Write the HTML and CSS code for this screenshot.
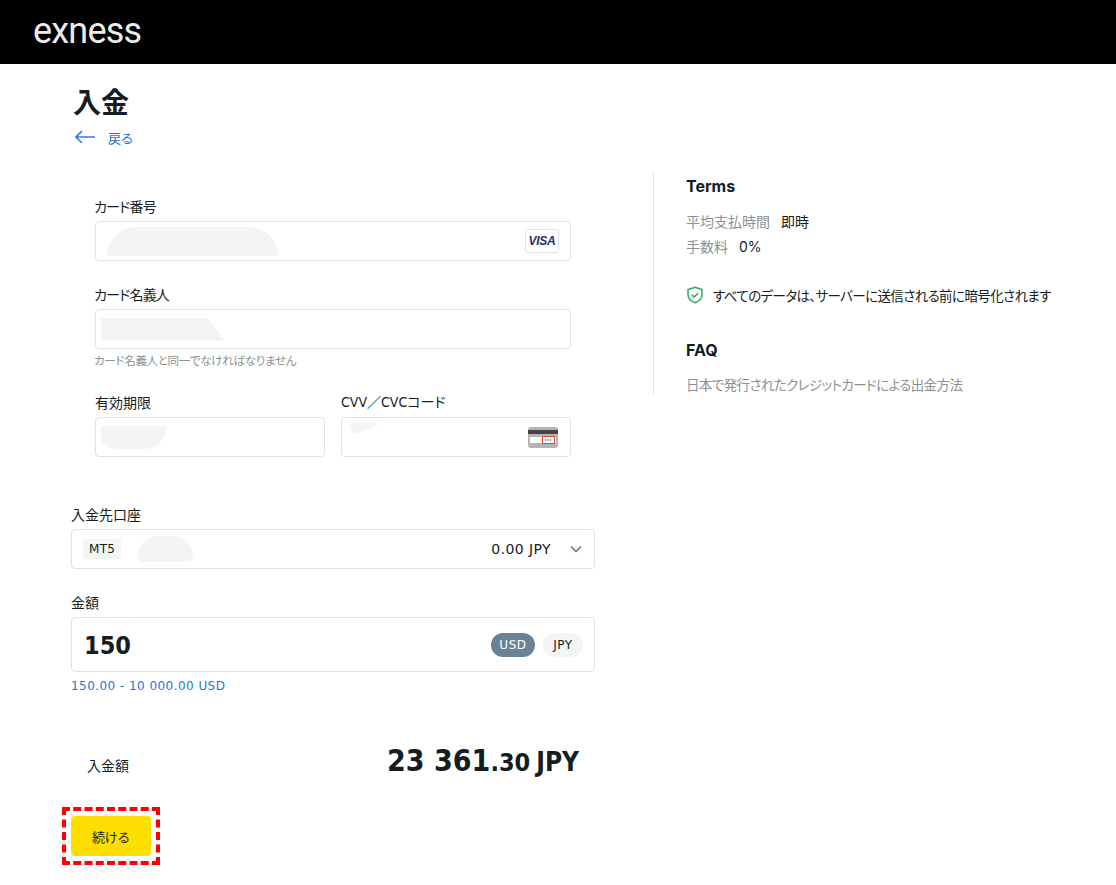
FILE: index.html
```html
<!DOCTYPE html>
<html lang="ja">
<head>
    <meta charset="UTF-8">
    <meta name="viewport" content="width=device-width, initial-scale=1.0">
    <title>入金</title>
    <link rel="stylesheet" href="styles.css">
</head>
<body>
    <div class="topbar">
        <span class="logo">exness</span>
    </div>
    <div class="page">
        <h1 class="title">入金</h1>
        <a class="back" href="#">
            <svg width="20" height="14" viewBox="0 0 20 14" fill="none" stroke="#2f80d0" stroke-width="1.6">
                <path d="M20 7H1M7 1L1 7l6 6"/>
            </svg>
            <span>戻る</span>
        </a>
        <div class="columns">
            <div class="form">
                <div class="card-fields">
                    <div class="field">
                        <label class="label label-kana">カード番号</label>
                        <div class="input">
                            <div class="mask mask-number"></div>
                            <div class="visa">VISA</div>
                        </div>
                    </div>
                    <div class="field">
                        <label class="label label-kana">カード名義人</label>
                        <div class="input">
                            <div class="mask mask-name"></div>
                        </div>
                        <div class="hint">カード名義人と同一でなければなりません</div>
                    </div>
                    <div class="field-row">
                        <div class="field">
                            <label class="label">有効期限</label>
                            <div class="input">
                                <div class="mask mask-expiry"></div>
                            </div>
                        </div>
                        <div class="field">
                            <label class="label condensed">CVV／CVCコード</label>
                            <div class="input">
                                <div class="mask mask-cvv"></div>
                                <svg class="cvv-icon" width="30" height="21" viewBox="0 0 30 21">
                                    <rect width="30" height="21" rx="3" fill="#b4b4b4"/>
                                    <rect y="3" width="30" height="4" fill="#444"/>
                                    <rect x="2" y="10" width="26" height="6" fill="#fff"/>
                                    <rect x="14.5" y="9.5" width="12" height="7" fill="#fff" stroke="#e2492f"/>
                                    <path d="M17 13h7" stroke="#777" stroke-width="1.4" stroke-dasharray="1.4 1"/>
                                </svg>
                            </div>
                        </div>
                    </div>
                </div>

                <div class="field account">
                    <label class="label">入金先口座</label>
                    <div class="input select">
                        <span class="tag latin">MT5</span>
                        <div class="mask mask-account"></div>
                        <span class="balance latin">0.00 JPY</span>
                        <svg width="12" height="8" viewBox="0 0 12 8" fill="none" stroke="#6b7479" stroke-width="1.4">
                            <path d="M1 1.5l5 5 5-5"/>
                        </svg>
                    </div>
                </div>

                <div class="field amount">
                    <label class="label">金額</label>
                    <div class="input amount-input">
                        <span class="amount-value condensed">150</span>
                        <span class="pill pill-active latin">USD</span>
                        <span class="pill latin">JPY</span>
                    </div>
                    <div class="range latin">150.00 - 10 000.00 USD</div>
                </div>

                <div class="total">
                    <span class="total-label">入金額</span>
                    <span class="total-value condensed">23 361<small>.30</small><span class="total-cur latin">JPY</span></span>
                </div>

                <div class="highlight">
                    <button class="button">続ける</button>
                </div>
            </div>

            <div class="side">
                <h3 class="side-title">Terms</h3>
                <div class="term"><span class="term-name">平均支払時間</span><span>即時</span></div>
                <div class="term"><span class="term-name">手数料</span><span>0%</span></div>
                <div class="secure">
                    <svg width="18" height="18" viewBox="0 0 18 18" fill="none" stroke="#27ae60" stroke-width="1.5">
                        <path d="M9 1.2l7 2.4v5c0 4-3 6.8-7 8.2-4-1.400-7-4.200-7-8.200v-5z"/>
                        <path d="M5.800 8.800l2.300 2.300 4.100-4.100"/>
                    </svg>
                    <span>すべてのデータは、サーバーに送信される前に暗号化されます</span>
                </div>
                <h3 class="side-title faq-title">FAQ</h3>
                <a class="faq-link" href="#">日本で発行されたクレジットカードによる出金方法</a>
            </div>
        </div>
    </div>
</body>
</html>
```

FILE: styles.css
```css
body {
    font-family: Inter, "Noto Sans CJK JP", sans-serif;
    font-feature-settings: "palt";
    margin: 0;
    background-color: white;
    color: #141d22;
    font-size: 14px;
}
.latin {
    font-family: "DejaVu Sans", "Noto Sans CJK JP", sans-serif;
}
.condensed {
    font-family: "DejaVu Sans Condensed", "DejaVu Sans", "Noto Sans CJK JP", sans-serif;
    font-stretch: condensed;
}
.topbar {
    height: 64px;
    background: black;
    padding-left: 33px;
    display: flex;
    align-items: center;
}
.logo {
    font-family: Roboto, sans-serif;
    font-size: 36px;
    line-height: 64px;
    letter-spacing: -0.8px;
    color: #ececec;
    margin-top: -2px;
}
.page {
    padding-left: 71px;
}
.title {
    margin: 0;
    padding-top: 21px;
    padding-left: 2px;
    font-size: 28px;
    line-height: 36px;
    font-weight: 700;
}
.back {
    display: flex;
    align-items: center;
    gap: 13px;
    margin-top: 6px;
    padding-left: 4px;
    height: 20px;
    font-size: 13px;
    color: #1f73c9;
    text-decoration: none;
}
.columns {
    display: flex;
    margin-top: 26px;
    align-items: flex-start;
}
.form {
    width: 524px;
    margin-right: 58px;
}
.card-fields {
    padding: 25px 24px 0;
}
.field {
    margin-bottom: 25px;
}
.field-row {
    display: flex;
    gap: 16px;
}
.field-row .field {
    flex: 1;
    margin-bottom: 0;
}
.label {
    display: block;
    height: 19px;
    line-height: 17px;
    margin-bottom: 4px;
}
.label-kana {
    margin-left: -1px;
    letter-spacing: -0.8px;
}
.input {
    height: 40px;
    box-sizing: border-box;
    border: 1px solid #dfe1e2;
    border-radius: 4px;
    display: flex;
    align-items: center;
    justify-content: space-between;
    position: relative;
}
.hint {
    margin: 4px 0 0 -1px;
    font-size: 11.500px;
    line-height: 16px;
    letter-spacing: -0.3px;
    color: #8b9094;
}
.mask {
    background: #f3f4f4;
}
.mask-number {
    width: 171px;
    height: 29px;
    margin-left: 11px;
    margin-top: 1px;
    border-radius: 30px 30px 0 0;
}
.mask-name {
    width: 124px;
    height: 23px;
    margin-left: 5px;
    clip-path: polygon(0 0, 85% 0, 100% 100%, 0 100%);
}
.mask-expiry {
    width: 66px;
    height: 23px;
    margin-left: 5px;
    border-radius: 0 0 50px 30px;
}
.mask-cvv {
    width: 31px;
    height: 10px;
    margin: -18px 0 0 8px;
    clip-path: polygon(0 0, 100% 0, 30% 100%, 8% 100%);
}
.visa {
    width: 34px;
    height: 24px;
    box-sizing: border-box;
    margin-right: 11px;
    border: 1px solid #dfe1e2;
    border-radius: 3px;
    color: #1c3266;
    font-family: "Liberation Sans", sans-serif;
    font-size: 12px;
    font-weight: 700;
    font-style: italic;
    line-height: 22px;
    letter-spacing: -0.3px;
    text-align: center;
}
.cvv-icon {
    margin-right: 12px;
}
.account {
    margin-top: 49px;
}
.select {
    justify-content: flex-start;
    padding: 0 12px 0 11px;
}
.tag {
    background: #f3f4f4;
    border-radius: 3px;
    font-size: 12px;
    line-height: 20px;
    letter-spacing: 0.3px;
    padding: 0 6px;
}
.mask-account {
    width: 55px;
    height: 26px;
    margin-left: 17px;
    margin-top: -1px;
    border-radius: 20px 20px 6px 6px;
}
.balance {
    margin-left: auto;
    margin-right: 19px;
    font-size: 14px;
    letter-spacing: 0.4px;
}
.amount {
    margin-bottom: 0;
}
.amount-input {
    height: 55px;
    justify-content: flex-start;
    gap: 8px;
    padding: 0 11px 0 12px;
}
.amount-value {
    font-size: 25px;
    font-weight: 700;
    margin-top: 2px;
    margin-right: auto;
}
.pill {
    min-width: 40px;
    height: 24px;
    box-sizing: border-box;
    line-height: 24px;
    padding: 0 8.500px;
    border-radius: 12px;
    background: #f3f4f4;
    font-size: 12px;
    letter-spacing: 0.5px;
    text-align: center;
}
.pill-active {
    background: #6a8295;
    color: white;
}
.range {
    margin-top: 6px;
    font-size: 12px;
    line-height: 16px;
    letter-spacing: 0.45px;
    color: #1f78d1;
}
.total {
    display: flex;
    justify-content: space-between;
    align-items: baseline;
    margin-top: 45px;
    padding: 0 16px;
}
.total-value {
    font-size: 30px;
    font-weight: 700;
    line-height: 44px;
}
.total-value small {
    font-size: 25px;
}
.total-cur {
    margin-left: 6px;
    font-size: 26px;
}
.highlight {
    display: inline-block;
    margin: 22px 0 0 -9px;
    padding: 5px;
    border: 4px dashed red;
}
.button {
    display: block;
    width: 80px;
    height: 40px;
    border: 0;
    border-radius: 4px;
    background-color: #ffde02;
    color: #141d22;
    font-family: inherit;
    font-size: 13px;
    letter-spacing: -0.3px;
}
.side {
    height: 221px;
    box-sizing: border-box;
    border-left: 1px solid #dfe1e2;
    padding-left: 32px;
}
.side-title {
    margin: 4px 0 0;
    font-size: 16px;
    line-height: 18px;
    font-weight: 700;
}
.term {
    display: flex;
    gap: 11px;
    margin-top: 7px;
    font-size: 14px;
    line-height: 18px;
}
.side-title + .term {
    margin-top: 18px;
}
.term-name {
    color: #8b9094;
}
.secure {
    display: flex;
    align-items: center;
    gap: 9px;
    margin-top: 29px;
    font-size: 13.500px;
    letter-spacing: -0.6px;
    white-space: nowrap;
}
.faq-title {
    margin-top: 36px;
}
.faq-link {
    display: block;
    margin-top: 17px;
    font-size: 13.500px;
    line-height: 18px;
    letter-spacing: -0.6px;
    color: #8b9094;
    text-decoration: none;
}
```
